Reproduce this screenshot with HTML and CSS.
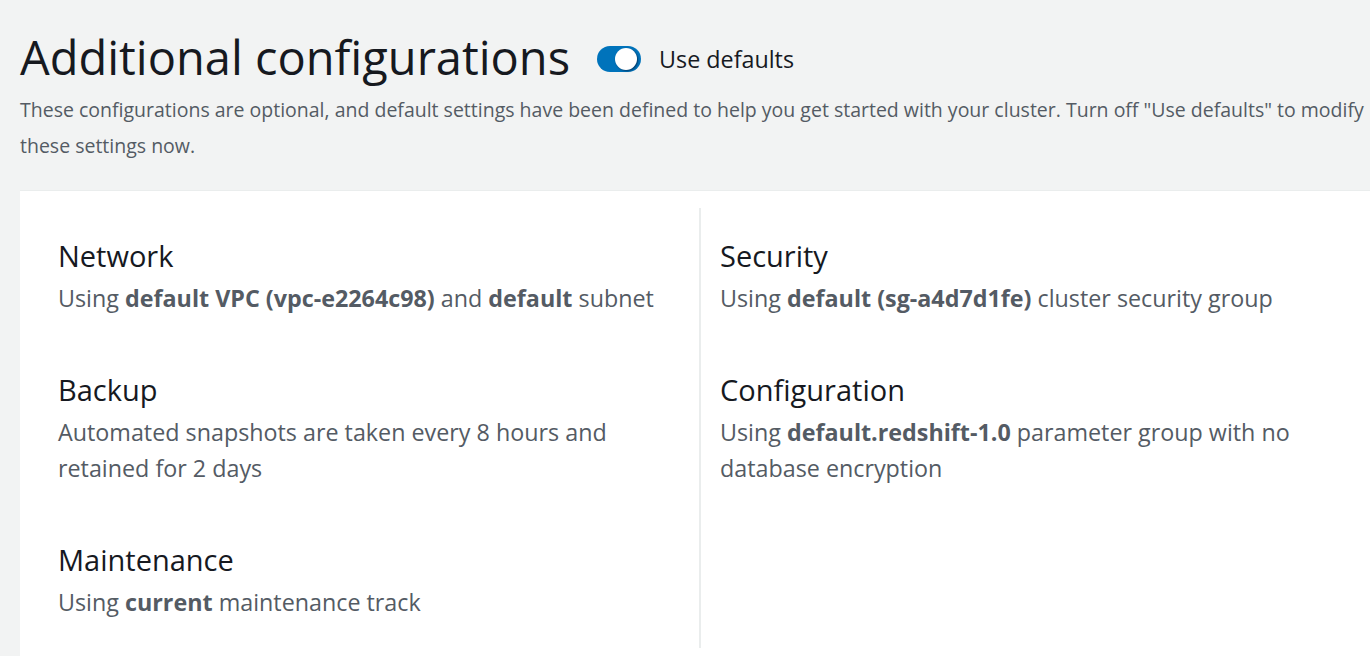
FILE: index.html
```html
<!DOCTYPE html>
<html lang="en">
<head>
<meta charset="utf-8">
<title>Additional configurations</title>
<link rel="stylesheet" href="styles.css">
</head>
<body>
<div class="page">
  <div class="header">
    <h1 class="title">Additional configurations</h1>
    <label class="toggle">
      <span class="switch"><span class="knob"></span></span>
      <span class="toggle-label">Use defaults</span>
    </label>
  </div>
  <p class="desc">These configurations are optional, and default settings have been defined to help you get started with your cluster. Turn off "Use defaults" to modify these settings now.</p>
  <div class="panel">
    <div class="col col-left">
      <div class="item">
        <h2 class="item-title">Network</h2>
        <p class="item-text">Using <b>default VPC (vpc-e2264c98)</b> and <b>default</b> subnet</p>
      </div>
      <div class="item">
        <h2 class="item-title">Backup</h2>
        <p class="item-text">Automated snapshots are taken every 8 hours and retained for 2 days</p>
      </div>
      <div class="item">
        <h2 class="item-title">Maintenance</h2>
        <p class="item-text">Using <b>current</b> maintenance track</p>
      </div>
    </div>
    <div class="col col-right">
      <div class="item">
        <h2 class="item-title">Security</h2>
        <p class="item-text">Using <b>default (sg-a4d7d1fe)</b> cluster security group</p>
      </div>
      <div class="item">
        <h2 class="item-title">Configuration</h2>
        <p class="item-text">Using <b>default.redshift-1.0</b> parameter group with no database encryption</p>
      </div>
    </div>
  </div>
</div>
</body>
</html>
```

FILE: styles.css
```css
html, body {
  margin: 0;
  padding: 0;
  background: #f2f3f3;
  overflow: hidden;
  height: 656px;
}
body {
  font-family: "Open Sans", "Noto Sans", sans-serif;
  color: #16191f;
}
.page {
  width: 1350px;
  margin-left: 20px;
}
.header {
  display: flex;
  align-items: center;
  padding-top: 26px;
  height: 62px;
  box-sizing: content-box;
}
.title {
  margin: 0;
  font-size: 47px;
  font-weight: 400;
  line-height: 62px;
  color: #16191f;
}
.toggle {
  display: flex;
  align-items: center;
  margin-left: 27px;
  margin-top: 4px;
}
.switch {
  position: relative;
  display: block;
  width: 44px;
  height: 26px;
  border-radius: 13px;
  background: #0073bb;
}
.knob {
  position: absolute;
  right: 4px;
  top: 2px;
  width: 22px;
  height: 22px;
  border-radius: 50%;
  background: #fff;
  box-shadow: 1px 1px 2px rgba(0, 20, 50, 0.6);
}
.toggle-label {
  margin-left: 18px;
  font-size: 23.3px;
  color: #16191f;
}
.desc {
  margin: 0;
  padding-top: 4px;
  font-size: 19.5px;
  line-height: 36px;
  color: #545b64;
  width: 1360px;
}
.panel {
  margin-top: 26px;
  background: #fff;
  border-top: 1px solid #eaeded;
  display: grid;
  grid-template-columns: 679px 1fr;
  padding-top: 17px;
  height: 466px;
  box-sizing: border-box;
}
.col {
  height: 440px;
}
.col-left {
  padding-left: 38px;
}
.col-right {
  border-left: 2px solid #eaeded;
  padding-left: 19px;
}
.item {
  padding-top: 28px;
  margin-bottom: 26px;
}
.item-title {
  margin: 0;
  font-size: 29px;
  font-weight: 400;
  line-height: 40px;
  color: #16191f;
}
.item-text {
  margin: 4px 0 0;
  font-size: 23.3px;
  line-height: 36px;
  color: #545b64;
  max-width: 615px;
}
.item-text b {
  font-weight: 700;
}
```
